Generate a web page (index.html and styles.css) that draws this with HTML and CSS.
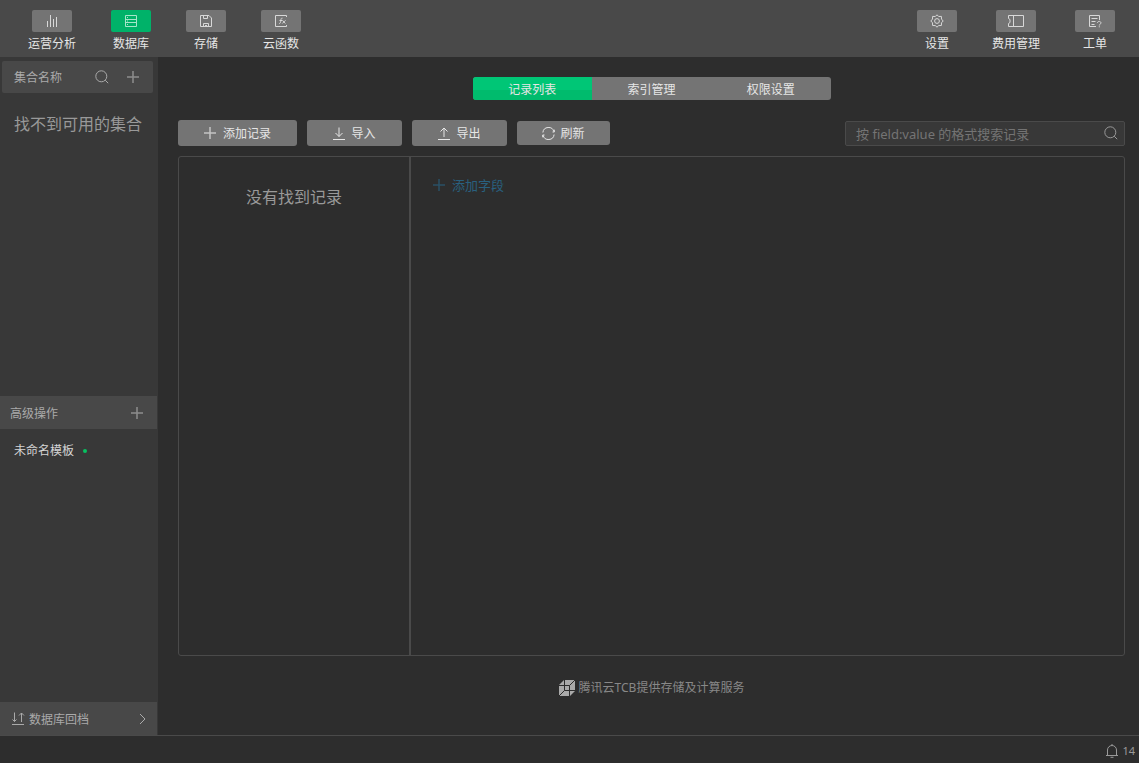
FILE: index.html
```html
<!DOCTYPE html>
<html lang="zh-CN">
<head>
  <meta charset="UTF-8" />
  <meta name="viewport" content="width=device-width, initial-scale=1.0"/>
  <title>云开发控制台</title>
  <link rel="stylesheet" href="styles.css">
</head>
<body>
  <!-- Top navigation -->
  <header class="topbar">
    <nav class="nav">
      <a class="nav-item">
        <span class="nav-icon"><svg width="12" height="14" viewBox="0 0 12 14"><path d="M1.500 7v6M4.500 1v12M7.500 5v8M10.500 3v10"/></svg></span>
        运营分析
      </a>
      <a class="nav-item active">
        <span class="nav-icon"><svg width="12" height="14" viewBox="0 0 12 14"><path d="M.5 1.500h11v11H.5zM.5 5.500h11M.5 8.500h11M2 3.500h1M2 7h1M2 10.500h1"/></svg></span>
        数据库
      </a>
      <a class="nav-item">
        <span class="nav-icon"><svg width="12" height="14" viewBox="0 0 12 14"><path d="M.5 1.500h8.500l2.500 2.500v8.500H.5zM3.500 1.500v3h4v-3M3.500 12.500v-3h5v3M5 11.500h2"/></svg></span>
        存储
      </a>
      <a class="nav-item">
        <span class="nav-icon"><svg width="12" height="14" viewBox="0 0 12 14"><path d="M11.500 3V1.500H.5v11h11V11"/><path d="M7.500 4.200c-1.500-.4-1.500 1-1.700 2.500S5.300 9.800 4.200 9.500M4.500 6.500h2.700M7.500 6.300l2.800 3.200M10.500 6.300l-3.200 3.200"/></svg></span>
        云函数
      </a>
    </nav>
    <nav class="nav">
      <a class="nav-item">
        <span class="nav-icon"><svg width="14" height="14" viewBox="0 0 14 14"><path d="M7 .8l1.700 1.700 2.700-.1.100 2.700L13.200 7l-1.700 1.800-.1 2.700-2.700.1L7 13.200l-1.700-1.600-2.700-.1-.1-2.700L.8 7l1.700-1.900.1-2.700 2.700.1z"/><circle cx="7" cy="7" r="2.400"/></svg></span>
        设置
      </a>
      <a class="nav-item">
        <span class="nav-icon"><svg width="16" height="14" viewBox="0 0 16 14"><path d="M.5 1.500h15v11H.5v-3L2 8.500v-3L.5 4.500zM5.500 1.500v11"/></svg></span>
        费用管理
      </a>
      <a class="nav-item">
        <span class="nav-icon"><svg width="13" height="14" viewBox="0 0 13 14"><path d="M10.500 6V1.500h-10v11H7M2.500 4.500h6M2.500 7.500h4M2.500 10.500h3M8.500 9c0-2.300 3.500-2 3.500 0 0 1.200-1.700 1-1.700 2.500M10.300 12.300v1"/></svg></span>
        工单
      </a>
    </nav>
  </header>

  <div class="content">
    <!-- Collections -->
    <aside class="sidebar">
      <div class="collections">
        <div class="collection-head">
          <span class="label">集合名称</span>
          <svg class="search-icon" width="14" height="14" viewBox="0 0 14 14"><circle cx="6.300" cy="6.300" r="5.500"/><path d="M10.200 10.200l3 3"/></svg>
          <svg class="plus" width="12" height="12" viewBox="0 0 12 12"><path d="M6 0v12M0 6h12"/></svg>
        </div>
        <p class="empty">找不到可用的集合</p>
      </div>
      <div class="advanced">
        <div class="side-bar">
          <span class="label">高级操作</span>
          <svg class="plus" width="12" height="12" viewBox="0 0 12 12"><path d="M6 0v12M0 6h12"/></svg>
        </div>
        <div class="template"><span class="label">未命名模板</span><i class="dot"></i></div>
      </div>
      <div class="side-bar restore">
        <svg width="13" height="13" viewBox="0 0 13 13"><path d="M2.500.5v9M.5 7.500l2 2 2-2M9.500 10V1M7 3.500L9.500 1 12 3.500M0 12.500h12"/></svg>
        <span class="label">数据库回档</span>
        <svg class="chevron" width="7" height="12" viewBox="0 0 7 12"><path d="M1 1l5 5-5 5"/></svg>
      </div>
    </aside>

    <!-- Records -->
    <main class="main">
      <div class="tabs">
        <a class="tab active">记录列表</a>
        <a class="tab">索引管理</a>
        <a class="tab">权限设置</a>
      </div>

      <div class="toolbar">
        <button class="btn btn-add"><svg class="plus" width="12" height="12" viewBox="0 0 12 12"><path d="M6 0v12M0 6h12"/></svg><span class="label">添加记录</span></button>
        <button class="btn"><svg width="12" height="13" viewBox="0 0 12 13"><path d="M6 .5v9M2.500 6L6 9.500 9.500 6M0 12.500h12"/></svg><span class="label">导入</span></button>
        <button class="btn"><svg width="12" height="13" viewBox="0 0 12 13"><path d="M6 10V1M2.500 4.500L6 1l3.500 3.500M0 12.500h12"/></svg><span class="label">导出</span></button>
        <button class="btn btn-refresh"><svg width="13" height="13" viewBox="0 0 13 13"><path d="M.9 5.500a5.600 5.600 0 0 1 11-.8M12.100 7.500a5.600 5.600 0 0 1-11 .8M12.300 2.700v2.300h-1.800M.7 10.300V8h1.800"/></svg><span class="label">刷新</span></button>
        <div class="search">
          <span class="label">按 field:value 的格式搜索记录</span>
          <svg class="search-icon" width="14" height="14" viewBox="0 0 14 14"><circle cx="6.300" cy="6.300" r="5.500"/><path d="M10.200 10.200l3 3"/></svg>
        </div>
      </div>

      <div class="panel">
        <div class="records">没有找到记录</div>
        <div class="fields">
          <a class="add-field"><svg class="plus" width="12" height="12" viewBox="0 0 12 12"><path d="M6 0v12M0 6h12"/></svg>添加字段</a>
        </div>
      </div>

      <div class="brand">
        <svg width="16" height="16" viewBox="0 0 16 16">
          <path class="cube" d="M5 0h11v11l-5 5H0V5z"/>
          <path class="cube-lines" d="M0 5.500h10.500V16M5.500 0v10.500H16M10.500 5.500L16 0M5.500 10.500L0 16"/>
        </svg>
        <span>腾讯云TCB提供存储及计算服务</span>
      </div>
    </main>
  </div>

  <footer class="statusbar">
    <svg width="12" height="14" viewBox="0 0 12 14"><path d="M0 11.500h12M1.500 11.500V6a4.500 4.500 0 0 1 9 0v5.500M6 0v1.500M4.500 13.300h3"/></svg>
    <span>14</span>
  </footer>
</body>
</html>
```

FILE: styles.css
```css
* {
  margin: 0;
  padding: 0;
  box-sizing: border-box;
}

body {
  height: 100vh;
  overflow: hidden;
  display: flex;
  flex-direction: column;
  background: #2d2d2d;
  color: #e6e6e6;
  font: 12px/18px "Noto Sans", "Noto Sans CJK SC", sans-serif;
}

svg {
  display: block;
  flex: none;
  fill: none;
  stroke: currentColor;
  stroke-width: 1;
}

/* nudges the text to the optical middle of its icon */
.label {
  padding-top: 2px;
}

/* Top navigation */
.topbar {
  height: 57px;
  flex: none;
  display: flex;
  justify-content: space-between;
  padding: 10px 24px 0 28px;
  background: #494949;
}

.nav {
  display: flex;
  gap: 35px;
}

.nav-item {
  min-width: 40px;
  display: flex;
  flex-direction: column;
  align-items: center;
  gap: 3px;
  white-space: nowrap;
}

.nav-icon {
  width: 40px;
  height: 22px;
  display: flex;
  align-items: center;
  justify-content: center;
  border-radius: 2px;
  background: #747474;
  color: #d8d8d8;
}

.nav-item.active .nav-icon {
  background: #00b269;
  color: #a6e5c9;
}

.content {
  flex: 1;
  min-height: 0;
  display: flex;
}

/* Sidebar */
.sidebar {
  width: 158px;
  flex: none;
  display: flex;
  flex-direction: column;
  background: #383838;
  color: #aaa;
}

.collections {
  height: 339px;
  padding: 4px 5px 0 2px;
}

.collection-head {
  height: 32px;
  display: flex;
  align-items: center;
  padding: 0 14px 0 12px;
  border-radius: 2px;
  background: #484848;
}

.collection-head .search-icon {
  margin: 0 18px 0 auto;
}

.plus {
  opacity: 0.7;
  stroke-width: 1.5;
}

.empty {
  margin-top: 19px;
  padding-left: 12px;
  font-size: 16px;
  line-height: 24px;
  color: #999;
  white-space: nowrap;
}

.advanced {
  flex: 1;
}

.side-bar {
  height: 33px;
  display: flex;
  align-items: center;
  justify-content: space-between;
  margin-right: 1px;
  padding: 0 14px 0 10px;
  background: #484848;
}

.template {
  display: flex;
  align-items: center;
  gap: 9px;
  padding: 11px 14px;
  color: #d5d5d5;
}

.dot {
  width: 4px;
  height: 4px;
  margin-top: 2px;
  border-radius: 50%;
  background: #07c160;
}

.restore {
  padding: 0 11px 0 12px;
}

.restore .label {
  margin: 0 auto 0 4px;
}

/* Main area */
.main {
  flex: 1;
  min-width: 0;
  display: flex;
  flex-direction: column;
  padding: 20px 14px 0 20px;
}

.tabs {
  width: 358px;
  height: 23px;
  display: flex;
  align-self: center;
  border-radius: 3px;
  overflow: hidden;
  background: #747474;
}

.tab {
  flex: 1;
  line-height: 26px;
  text-align: center;
}

.tab.active {
  background: linear-gradient(#00c676 55%, #00bb6d 55%);
}

.toolbar {
  height: 26px;
  display: flex;
  align-items: center;
  gap: 10px;
  margin-top: 20px;
}

.btn {
  width: 95px;
  height: 26px;
  display: flex;
  align-items: center;
  justify-content: center;
  gap: 6px;
  border: none;
  border-radius: 3px;
  background: #747474;
  color: #e6e6e6;
  font: inherit;
}

.btn-add {
  width: 119px;
  gap: 7px;
}

.btn-refresh {
  width: 93px;
  height: 24px;
  gap: 5px;
}

.search {
  width: 280px;
  height: 25px;
  display: flex;
  align-items: center;
  justify-content: space-between;
  margin-left: auto;
  padding: 0 6px 0 10px;
  border: 1px solid #4a4a4a;
  border-radius: 2px;
  background: #383838;
  color: #747474;
  font-size: 13px;
  white-space: nowrap;
}

.search .search-icon {
  color: #999;
}

.panel {
  height: 500px;
  display: flex;
  margin-top: 10px;
  border: 1px solid #4a4a4a;
  border-radius: 3px;
}

.records {
  width: 232px;
  padding-top: 28px;
  border-right: 2px solid #4a4a4a;
  font-size: 16px;
  line-height: 24px;
  text-align: center;
  color: #999;
}

.fields {
  flex: 1;
  padding: 19px 22px;
}

.add-field {
  display: flex;
  align-items: center;
  gap: 7px;
  color: #29607f;
  font-size: 13px;
}

.brand {
  display: flex;
  align-items: center;
  justify-content: center;
  gap: 4px;
  margin-top: 23px;
  color: #888;
}

.cube {
  fill: #aaa;
  stroke: none;
}

.cube-lines {
  stroke: #2d2d2d;
}

/* Status bar */
.statusbar {
  height: 28px;
  flex: none;
  display: flex;
  align-items: center;
  justify-content: flex-end;
  gap: 4px;
  padding: 3px 4px 0 0;
  border-top: 1px solid #4a4a4a;
  color: #999;
  font-size: 11px;
}
```
